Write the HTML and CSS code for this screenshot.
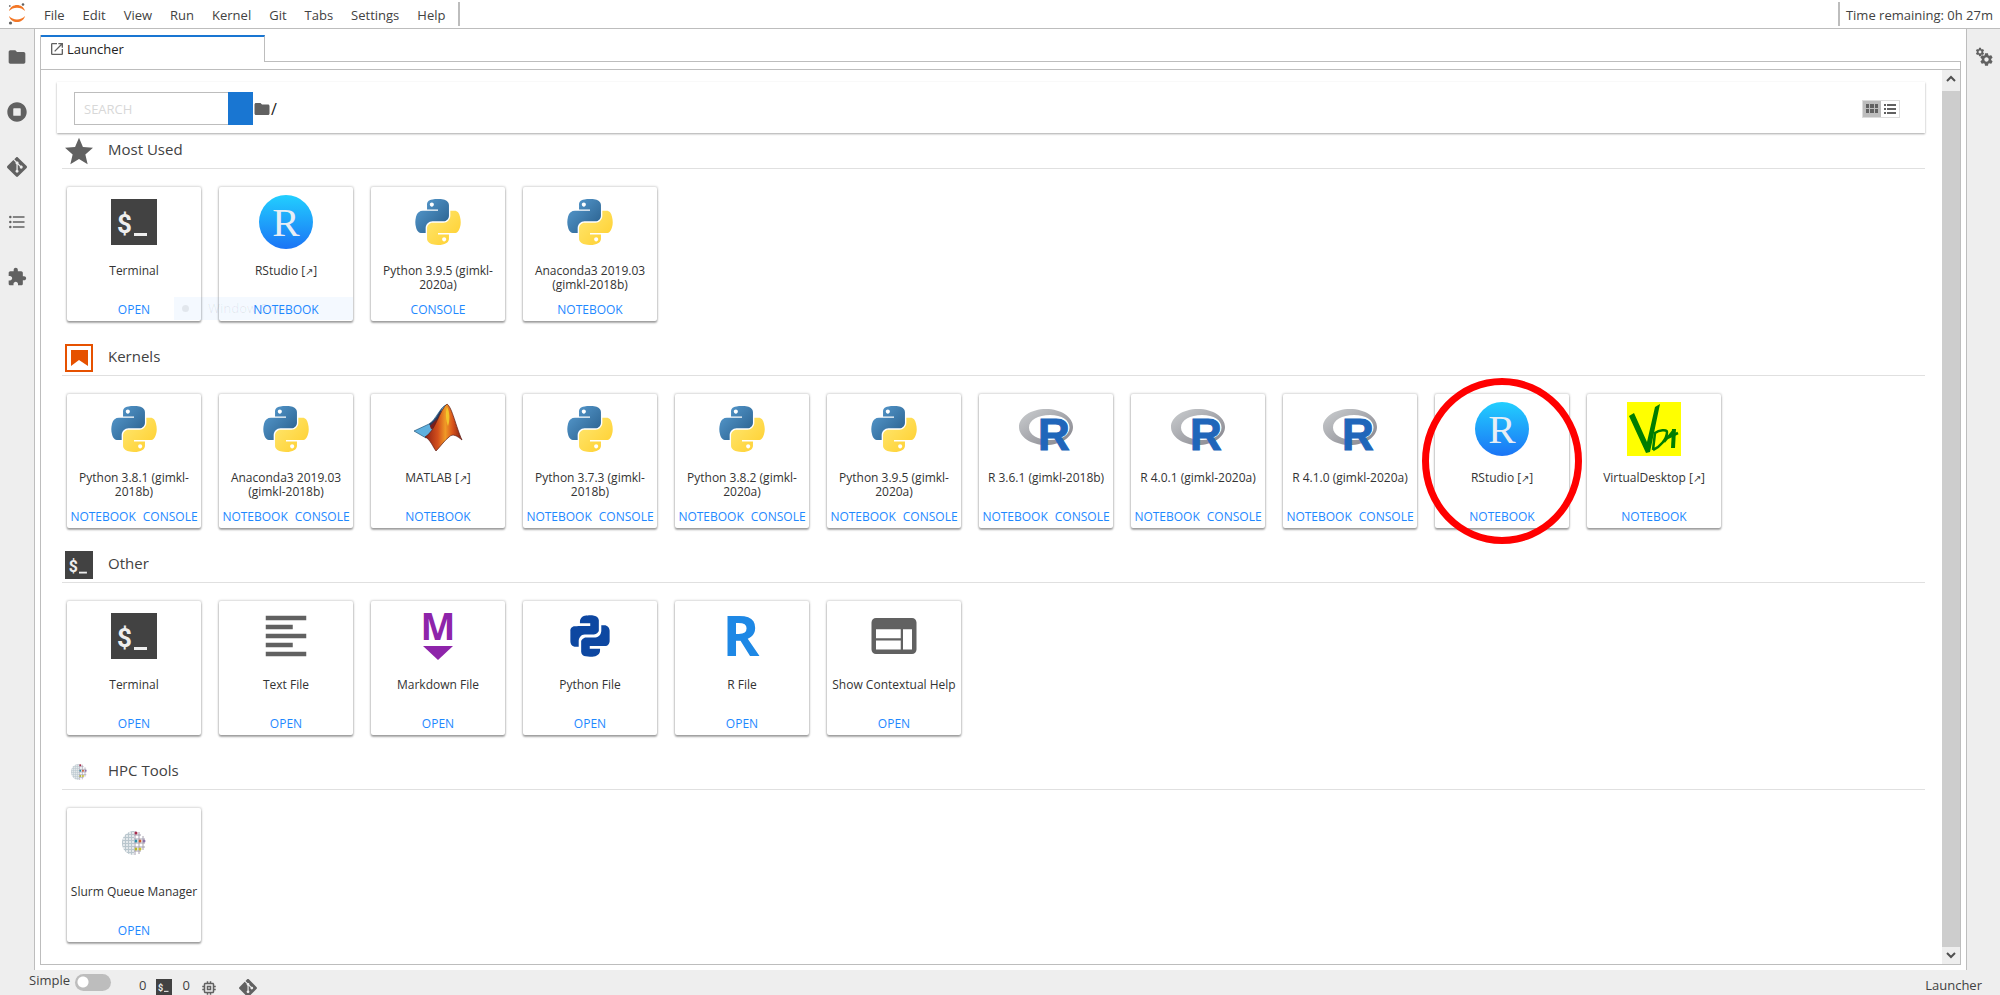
FILE: index.html
```
<!DOCTYPE html>
<html lang="en">
<head>
<meta charset="utf-8">
<title>JupyterLab</title>
<link rel="stylesheet" href="styles.css">
</head>
<body>
<svg class="defs" aria-hidden="true">
  <defs>
    <linearGradient id="py-blue" x1="0" y1="0" x2="1" y2="1"><stop offset="0" stop-color="#5a9fd4"/><stop offset="1" stop-color="#255a87"/></linearGradient>
    <linearGradient id="py-yellow" x1="0" y1="0" x2="1" y2="1"><stop offset="0" stop-color="#ffe873"/><stop offset="1" stop-color="#ffce2b"/></linearGradient>
    <linearGradient id="rs-blue" x1="0" y1="0" x2="0" y2="1"><stop offset="0" stop-color="#22cfff"/><stop offset="1" stop-color="#1b74f5"/></linearGradient>
    <linearGradient id="r-ring" x1="0" y1="0" x2="1" y2="1"><stop offset="0" stop-color="#cbced0"/><stop offset="1" stop-color="#84838b"/></linearGradient>
    <linearGradient id="ml-orange" x1="0" y1="0" x2="1" y2="0"><stop offset="0" stop-color="#8c1f14"/><stop offset=".35" stop-color="#d4501c"/><stop offset=".55" stop-color="#ef9a26"/><stop offset=".75" stop-color="#d9541b"/><stop offset="1" stop-color="#7c1c12"/></linearGradient>
    <pattern id="mesh" width="3" height="3" patternUnits="userSpaceOnUse"><path d="M0 .5H3M.5 0V3" stroke="#b9c6cd" stroke-width="1"/></pattern>
  </defs>
  <symbol id="folder" viewBox="0 0 24 24"><path d="M10 4H4c-1.100 0-2 .9-2 2v12c0 1.100.9 2 2 2h16c1.100 0 2-.9 2-2V8c0-1.100-.9-2-2-2h-8z"/></symbol>
  <symbol id="running" viewBox="0 0 512 512"><path d="M256 8C119 8 8 119 8 256s111 248 248 248 248-111 248-248S393 8 256 8zm96 328c0 8.800-7.200 16-16 16H176c-8.800 0-16-7.200-16-16V176c0-8.800 7.200-16 16-16h160c8.800 0 16 7.200 16 16z"/></symbol>
  <symbol id="git" viewBox="0 0 24 24"><path d="M23.546 10.93L13.067.452c-.604-.603-1.582-.603-2.188 0L8.708 2.627l2.760 2.760c.645-.215 1.379-.07 1.889.441.516.515.658 1.258.438 1.900l2.658 2.660c.645-.223 1.387-.078 1.900.435.721.72.721 1.884 0 2.604-.719.719-1.881.719-2.600 0-.539-.541-.674-1.337-.404-1.996L12.860 8.955v6.525c.176.086.342.203.488.348.713.721.713 1.883 0 2.600-.719.721-1.889.721-2.609 0-.719-.719-.719-1.879 0-2.598.182-.18.387-.316.605-.406V8.835c-.217-.091-.424-.222-.6-.401-.545-.545-.676-1.342-.396-2.009L7.636 3.700.45 10.881c-.6.605-.6 1.584 0 2.189l10.480 10.477c.604.604 1.582.604 2.186 0l10.430-10.430c.605-.603.605-1.582 0-2.187"/></symbol>
  <symbol id="toc" viewBox="0 0 24 24"><path d="M7 5H21V7H7zM7 11H21V13H7zM7 17H21V19H7z"/><circle cx="4" cy="6" r="1.500"/><circle cx="4" cy="12" r="1.500"/><circle cx="4" cy="18" r="1.500"/></symbol>
  <symbol id="puzzle" viewBox="0 0 24 24"><path d="M20.500 11H19V7c0-1.100-.9-2-2-2h-4V3.500C13 2.120 11.880 1 10.500 1S8 2.120 8 3.500V5H4c-1.100 0-1.990.9-1.990 2v3.800H3.500c1.490 0 2.700 1.210 2.700 2.700s-1.210 2.700-2.700 2.700H2V20c0 1.100.9 2 2 2h3.800v-1.500c0-1.490 1.210-2.700 2.700-2.700s2.700 1.210 2.700 2.700V22H17c1.100 0 2-.9 2-2v-4h1.500c1.380 0 2.500-1.120 2.500-2.500S21.880 11 20.500 11z"/></symbol>
  <symbol id="gear" viewBox="0 0 24 24"><path d="M19.430 12.980c.04-.32.07-.64.07-.98s-.03-.66-.07-.98l2.110-1.650c.19-.15.24-.42.12-.64l-2-3.460c-.12-.22-.39-.3-.61-.22l-2.490 1c-.52-.4-1.080-.73-1.690-.98l-.38-2.650C14.460 2.180 14.250 2 14 2h-4c-.25 0-.46.18-.49.42l-.38 2.650c-.61.25-1.170.59-1.690.98l-2.490-1c-.23-.09-.49 0-.61.22l-2 3.460c-.13.22-.07.49.12.64l2.110 1.650c-.04.32-.07.65-.07.98s.03.66.07.98l-2.110 1.650c-.19.15-.24.42-.12.64l2 3.460c.12.22.39.3.61.22l2.490-1c.52.4 1.080.73 1.690.98l.38 2.650c.03.24.24.42.49.42h4c.25 0 .46-.18.49-.42l.38-2.650c.61-.25 1.170-.59 1.690-.98l2.490 1c.23.09.49 0 .61-.22l2-3.460c.12-.22.07-.49-.12-.64zM12 15.500c-1.930 0-3.500-1.570-3.500-3.500s1.570-3.500 3.500-3.500 3.500 1.570 3.500 3.500-1.570 3.500-3.500 3.500z"/></symbol>
  <symbol id="launch" viewBox="0 0 24 24"><path d="M19 19H5V5h7V3H5a2 2 0 00-2 2v14a2 2 0 002 2h14c1.100 0 2-.9 2-2v-7h-2zM14 3v2h3.590l-9.830 9.830 1.410 1.410L19 6.410V10h2V3z"/></symbol>
  <symbol id="chip" viewBox="0 0 24 24"><path d="M15 9H9v6h6V9zm-2 4h-2v-2h2v2zm8-2V9h-2V7c0-1.100-.9-2-2-2h-2V3h-2v2h-2V3H9v2H7c-1.100 0-2 .9-2 2v2H3v2h2v2H3v2h2v2c0 1.100.9 2 2 2h2v2h2v-2h2v2h2v-2h2c1.100 0 2-.9 2-2v-2h2v-2h-2v-2h2zm-4 6H7V7h10v10z"/></symbol>
  <symbol id="star" viewBox="2 2 20 19"><path d="M12 17.270L18.180 21l-1.640-7.030L22 9.240l-7.190-.61L12 2 9.190 8.630 2 9.240l5.460 4.730L5.820 21z"/></symbol>
  <symbol id="bookmark" viewBox="0 0 28 28"><path fill="none" stroke="#e65100" stroke-width="2" d="M1 1H27V27H1z"/><path fill="#e65100" d="M6 6H23V22L14 16 6 22z"/></symbol>
  <symbol id="python" viewBox="-10 -10 131 132"><path fill="url(#py-blue)" d="M54.919 0C50.335.022 45.958.413 42.106 1.095 30.760 3.099 28.700 7.295 28.700 15.032v10.219h26.812v3.406H18.637c-7.792 0-14.616 4.684-16.750 13.594-2.462 10.213-2.571 16.586 0 27.250 1.906 7.938 6.458 13.594 14.250 13.594h9.219v-12.250c0-8.850 7.657-16.656 16.750-16.656h26.781c7.455 0 13.406-6.138 13.406-13.625V15.033c0-7.266-6.130-12.725-13.406-13.937C64.282.328 59.502-.02 54.919 0zm-14.500 8.219c2.770 0 5.031 2.299 5.031 5.125s-2.261 5.094-5.031 5.094-5.031-2.278-5.031-5.094 2.252-5.125 5.031-5.125z"/><path fill="url(#py-yellow)" d="M85.638 28.657v11.906c0 9.231-7.826 17-16.750 17H42.107c-7.336 0-13.406 6.279-13.406 13.625v25.531c0 7.266 6.319 11.540 13.406 13.625 8.487 2.496 16.626 2.947 26.781 0 6.750-1.954 13.406-5.888 13.406-13.625V86.501H55.513v-3.406H95.700c7.792 0 10.696-5.435 13.406-13.594 2.799-8.399 2.680-16.476 0-27.250-1.926-7.757-5.604-13.594-13.406-13.594zM70.575 93.313c2.779 0 5.031 2.278 5.031 5.094s-2.252 5.125-5.031 5.125-5.031-2.299-5.031-5.125 2.261-5.094 5.031-5.094z"/></symbol>
  <symbol id="python-file" viewBox="0 0 22 22"><path fill="#0d47a1" d="M11.100 6.900V5.800H6.900c0-.5 0-1.300.2-1.600.4-.7.8-1.100 1.700-1.400 1.700-.3 2.500-.3 3.900-.1 1 .1 1.900.9 1.900 1.900v4.200c0 .5-.9 1.600-2 1.600H8.800c-1.500 0-2.400 1.400-2.400 2.800v2.200H4.700C3.500 15.100 3 14 3 13.100V9c-.1-1 .6-2 1.800-2 1.500-.1 6.300-.1 6.300-.1zM10.900 15.100v1.100h4.200c0 .5 0 1.300-.2 1.600-.4.7-.8 1.100-1.700 1.400-1.700.3-2.500.3-3.900.1-1-.1-1.900-.9-1.900-1.900v-4.200c0-.5.9-1.600 2-1.600h3.800c1.500 0 2.400-1.400 2.400-2.800V6.600h1.700C18.500 6.900 19 8 19 8.900V13c0 1-.7 2.100-1.900 2.100z"/></symbol>
  <symbol id="matlab" viewBox="0 0 54 54"><path fill="#5fb0de" stroke="#24577c" stroke-width=".7" d="M3 29L18 22C24 19 30 4 35 3C33 12 27 24 22 30L15 36z"/><path fill="#2a3a5e" d="M18 22C24 19 28 10 31 6C29 15 26 21 21 27z"/><path fill="#7a1e1e" d="M19 24L26 17L25 26L20 27z"/><path fill="url(#ml-orange)" stroke="#5b1a12" stroke-width=".7" d="M36 2C41 5 45 25 51 38C46 34 42 31 38 35C33 39 29 45 25 49C22 45 19 37 14 35C24 30 29 7 36 2z"/><path fill="#f6d32d" opacity=".8" d="M36 5C39 10 39 18 37 24C35 20 34 10 36 5z"/></symbol>
  <symbol id="r-ellipse" viewBox="0 0 54 54"><path fill="url(#r-ring)" fill-rule="evenodd" d="M27 7C42 7 54 15 54 25S42 43 27 43 0 35 0 25 12 7 27 7zM31 13C19 13 10 18 10 25.500S19 38 31 38 50.500 33 50.500 25.500 43 13 31 13z"/></symbol>
  <symbol id="vdi" viewBox="0 0 54 54"><path fill="#ff0" d="M0 0H54V54H0z"/><path fill="#007d00" d="M2 14L7 11L20 40L28 5L33 2L23 50L19 51z"/><path fill="none" stroke="#007d00" stroke-width="2.500" d="M26 48L28 31C32 28 40 27 40 30C40 37 33 45 26 48M37 40L47 28M38 37L51 31"/><path fill="none" stroke="#007d00" stroke-width="4" d="M47 27L46 46"/></symbol>
  <symbol id="text-file" viewBox="0 0 24 24"><path fill="#616161" d="M15 15H3v2h12zM15 7H3v2h12zM3 13h18v-2H3zM3 21h18v-2H3zM3 3v2h18V3z"/></symbol>
  <symbol id="inspector" viewBox="0 0 24 24"><path fill="#616161" d="M20 4H4c-1.100 0-2 .9-2 2v12c0 1.100.9 2 2 2h16c1.100 0 2-.9 2-2V6c0-1.100-.9-2-2-2zm-5 14H4v-4h11zm0-5H4V9h11zm5 5h-4V9h4z"/></symbol>
  <symbol id="slurm" viewBox="0 0 54 54"><path fill="#e3e8eb" d="M27 15A12 12 0 0 0 27 39z"/><path fill="url(#mesh)" d="M27 15A12 12 0 0 0 27 39z"/><path fill="none" stroke="#a5a0b0" stroke-width="1" d="M28 15V39M32 16V38M36 20V34M27 19H34M27 23H38M27 27H38M27 31H38M27 35H34"/><g><circle cx="29" cy="17" r="1.500" fill="#a52a4a"/><circle cx="29" cy="25" r="1.500" fill="#2c8fa8"/><circle cx="33" cy="25" r="1.500" fill="#cf5b32"/><circle cx="37" cy="25" r="1.500" fill="#8a6fa8"/><circle cx="29" cy="33" r="1.500" fill="#b5b52c"/><circle cx="33" cy="33" r="1.500" fill="#c7c032"/></g></symbol>
  <symbol id="jupyter" viewBox="0 0 18 22"><path fill="#f37726" d="M1 8C3 0 15 0 17 8C13 3.500 5 3.500 1 8zM1 13C3 21 15 21 17 13C13 17.500 5 17.500 1 13z"/><circle cx="1.800" cy="3" r=".9" fill="#767677"/><circle cx="15" cy="1.500" r="1.300" fill="#616262"/><circle cx="2.500" cy="20" r="1.600" fill="#616262"/></symbol>
</svg>

<header class="menubar">
  <svg class="logo" role="img" aria-label="Jupyter"><use href="#jupyter"/></svg>
  <nav class="menus">
    <button>File</button><button>Edit</button><button>View</button><button>Run</button><button>Kernel</button><button>Git</button><button>Tabs</button><button>Settings</button><button>Help</button>
  </nav>
  <span class="remaining">Time remaining: 0h 27m</span>
</header>

<div class="workspace">
  <aside class="side side-left">
    <button aria-label="File browser"><svg class="i20"><use href="#folder"/></svg></button>
    <button aria-label="Running"><svg class="i20"><use href="#running"/></svg></button>
    <button aria-label="Git"><svg class="i20"><use href="#git"/></svg></button>
    <button aria-label="Table of contents"><svg class="i20"><use href="#toc"/></svg></button>
    <button aria-label="Extensions"><svg class="i20"><use href="#puzzle"/></svg></button>
  </aside>

  <main class="dock">
    <div class="tabs">
      <button class="tab"><svg class="i16"><use href="#launch"/></svg>Launcher</button>
      <span class="tab-rest"></span>
    </div>
    <div class="panel">
      <div class="launcher">
        <form class="toolbar">
          <input type="text" placeholder="SEARCH" aria-label="Search">
          <button type="button" class="go" aria-label="Search now"></button>
          <svg class="crumb-icon"><use href="#folder"/></svg><span class="crumb">/</span>
          <div class="views">
            <button type="button" class="on" aria-label="Grid view"><svg viewBox="0 0 12 10"><path d="M0 0H3V4H0zM4 0H8V4H4zM9 0H12V4H9zM0 5H3V9H0zM4 5H8V9H4zM9 5H12V9H9z"/></svg></button>
            <button type="button" aria-label="List view"><svg viewBox="0 0 12 10"><path d="M0 0H2V2H0zM3 0H12V2H3zM0 4H2V6H0zM3 4H12V6H3zM0 8H2V10H0zM3 8H12V10H3z"/></svg></button>
          </div>
        </form>

        <section>
          <h2><svg><use href="#star"/></svg>Most Used</h2>
          <div class="cards">
            <article><svg viewBox="0 0 54 54"><path fill="#424242" d="M4 4H50V50H4z"/><text class="dollar" x="10" y="38">$</text><path fill="#eee" d="M27 38H40V41H27z"/></svg><p>Terminal</p><div><button>OPEN</button></div></article>
            <article><svg viewBox="0 0 54 54"><circle cx="27" cy="27" r="27" fill="url(#rs-blue)"/><text class="rs" x="27" y="41">R</text></svg><p>RStudio [<i>↗</i>]</p><div><button>NOTEBOOK</button></div><span class="ghost">Window Snip</span></article>
            <article><svg><use href="#python"/></svg><p>Python 3.9.5 (gimkl-2020a)</p><div><button>CONSOLE</button></div></article>
            <article><svg><use href="#python"/></svg><p>Anaconda3 2019.03 (gimkl-2018b)</p><div><button>NOTEBOOK</button></div></article>
          </div>
        </section>

        <section>
          <h2><svg><use href="#bookmark"/></svg>Kernels</h2>
          <div class="cards">
            <article><svg><use href="#python"/></svg><p>Python 3.8.1 (gimkl-2018b)</p><div><button>NOTEBOOK</button><button>CONSOLE</button></div></article>
            <article><svg><use href="#python"/></svg><p>Anaconda3 2019.03 (gimkl-2018b)</p><div><button>NOTEBOOK</button><button>CONSOLE</button></div></article>
            <article><svg><use href="#matlab"/></svg><p>MATLAB [<i>↗</i>]</p><div><button>NOTEBOOK</button></div></article>
            <article><svg><use href="#python"/></svg><p>Python 3.7.3 (gimkl-2018b)</p><div><button>NOTEBOOK</button><button>CONSOLE</button></div></article>
            <article><svg><use href="#python"/></svg><p>Python 3.8.2 (gimkl-2020a)</p><div><button>NOTEBOOK</button><button>CONSOLE</button></div></article>
            <article><svg><use href="#python"/></svg><p>Python 3.9.5 (gimkl-2020a)</p><div><button>NOTEBOOK</button><button>CONSOLE</button></div></article>
            <article><svg viewBox="0 0 54 54"><use href="#r-ellipse"/><text class="r-blue" x="19" y="48">R</text></svg><p>R 3.6.1 (gimkl-2018b)</p><div><button>NOTEBOOK</button><button>CONSOLE</button></div></article>
            <article><svg viewBox="0 0 54 54"><use href="#r-ellipse"/><text class="r-blue" x="19" y="48">R</text></svg><p>R 4.0.1 (gimkl-2020a)</p><div><button>NOTEBOOK</button><button>CONSOLE</button></div></article>
            <article><svg viewBox="0 0 54 54"><use href="#r-ellipse"/><text class="r-blue" x="19" y="48">R</text></svg><p>R 4.1.0 (gimkl-2020a)</p><div><button>NOTEBOOK</button><button>CONSOLE</button></div></article>
            <article><svg viewBox="0 0 54 54"><circle cx="27" cy="27" r="27" fill="url(#rs-blue)"/><text class="rs" x="27" y="41">R</text></svg><p>RStudio [<i>↗</i>]</p><div><button>NOTEBOOK</button></div><span class="ring"></span></article>
            <article><svg><use href="#vdi"/></svg><p>VirtualDesktop [<i>↗</i>]</p><div><button>NOTEBOOK</button></div></article>
          </div>
        </section>

        <section>
          <h2><svg viewBox="4 4 46 46"><path fill="#424242" d="M4 4H50V50H4z"/><text class="dollar" x="10" y="38">$</text><path fill="#eee" d="M27 38H40V41H27z"/></svg>Other</h2>
          <div class="cards">
            <article><svg viewBox="0 0 54 54"><path fill="#424242" d="M4 4H50V50H4z"/><text class="dollar" x="10" y="38">$</text><path fill="#eee" d="M27 38H40V41H27z"/></svg><p>Terminal</p><div><button>OPEN</button></div></article>
            <article><svg><use href="#text-file"/></svg><p>Text File</p><div><button>OPEN</button></div></article>
            <article><svg viewBox="0 0 54 54"><text class="md" x="27" y="31">M</text><path fill="#8e24aa" d="M12 37H42L27 51z"/></svg><p>Markdown File</p><div><button>OPEN</button></div></article>
            <article><svg><use href="#python-file"/></svg><p>Python File</p><div><button>OPEN</button></div></article>
            <article><svg viewBox="0 0 54 54"><text class="r-light" x="26" y="47">R</text></svg><p>R File</p><div><button>OPEN</button></div></article>
            <article><svg><use href="#inspector"/></svg><p>Show Contextual Help</p><div><button>OPEN</button></div></article>
          </div>
        </section>

        <section>
          <h2><svg viewBox="6 6 42 42"><use href="#slurm" width="54" height="54"/></svg>HPC Tools</h2>
          <div class="cards">
            <article><svg><use href="#slurm"/></svg><p>Slurm Queue Manager</p><div><button>OPEN</button></div></article>
          </div>
        </section>
      </div>
      <div class="scrollbar" aria-hidden="true">
        <span class="arrow"><svg viewBox="0 0 10 7"><path d="M1 6L5 2L9 6"/></svg></span>
        <span class="thumb"></span>
        <span class="arrow"><svg viewBox="0 0 10 7"><path d="M1 1L5 5L9 1"/></svg></span>
      </div>
    </div>
  </main>

  <aside class="side side-right">
    <button aria-label="Property inspector"><svg class="gears" viewBox="0 0 18 20"><use href="#gear" width="10" height="10"/><use href="#gear" x="4" y="5" width="15" height="15"/></svg></button>
  </aside>
</div>

<footer class="status">
  <label class="simple">Simple<input type="checkbox" role="switch"></label>
  <div class="counts">
    <span>0</span><svg class="i16" viewBox="4 4 46 46"><path fill="#424242" d="M4 4H50V50H4z"/><text class="dollar" x="10" y="38">$</text><path fill="#eee" d="M27 38H40V41H27z"/></svg>
    <span>0</span><svg class="i18"><use href="#chip"/></svg>
    <svg class="i18 git"><use href="#git"/></svg>
  </div>
  <span class="mode">Launcher</span>
</footer>
</body>
</html>
```
FILE: styles.css
```
* { box-sizing: border-box; }

body {
  margin: 0;
  height: 100vh;
  display: flex;
  flex-direction: column;
  overflow: hidden;
  background: #fff;
  color: #424242;
  font-family: "Open Sans", "Noto Sans", sans-serif;
  font-size: 13px;
}

button {
  border: 0;
  padding: 0;
  background: none;
  color: inherit;
  font: inherit;
}

svg { display: block; flex: none; fill: #616161; }
.defs { position: absolute; width: 0; height: 0; }
.i16 { width: 16px; height: 16px; }
.i18 { width: 18px; height: 18px; }
.i20 { width: 20px; height: 20px; }

.dollar { font: 700 26px Roboto, sans-serif; fill: #eee; }
.rs { font: 41px "Liberation Serif", serif; fill: #e8eef5; text-anchor: middle; }
.r-blue { font: 700 44px "Liberation Sans", sans-serif; fill: #2066ba; stroke: #2066ba; stroke-width: 1px; }
.md { font: 700 37px "Open Sans", sans-serif; fill: #8e24aa; text-anchor: middle; }
.r-light { font: 700 56px "Open Sans", sans-serif; fill: #1e88e5; text-anchor: middle; }

.menubar {
  display: flex;
  align-items: center;
  height: 29px;
  padding: 2px 7px 2px 8px;
  border-bottom: 1px solid #bdbdbd;
}
.logo { width: 18px; height: 22px; }
.menus {
  display: flex;
  align-items: center;
  gap: 18px;
  height: 24px;
  padding: 2px 13px 0 18px;
  border-right: 2px solid #bdbdbd;
}
.remaining {
  height: 24px;
  margin-left: auto;
  padding: 0 0 0 6px;
  border-left: 2px solid #bdbdbd;
  line-height: 26px;
}

.workspace { flex: 1; display: flex; min-height: 0; }
.side {
  display: flex;
  flex-direction: column;
  background: #eee;
}
.side button {
  display: flex;
  align-items: center;
  justify-content: center;
  height: 55px;
}
.side-left { width: 35px; border-right: 1px solid #bdbdbd; }
.side-right { width: 34px; border-left: 1px solid #bdbdbd; }
.gears { width: 18px; height: 20px; }

.dock {
  flex: 1;
  display: flex;
  flex-direction: column;
  min-width: 0;
  padding: 6px 5px 5px;
}
.tabs { display: flex; height: 34px; border-left: 1px solid #bdbdbd; }
.tab {
  display: flex;
  align-items: center;
  gap: 2px;
  width: 224px;
  height: 27px;
  padding: 0 8px 2px;
  border-top: 2px solid #1976d2;
  border-right: 1px solid #bdbdbd;
  color: #212121;
}
.tab-rest {
  flex: 1;
  margin-top: 26px;
  border: 1px solid #bdbdbd;
  border-width: 1px 1px 0 0;
}
.panel {
  flex: 1;
  display: flex;
  min-height: 0;
  border: 1px solid #bdbdbd;
}
.launcher { flex: 1; min-width: 0; padding: 12px 17px 0 16px; }

.toolbar {
  display: flex;
  align-items: center;
  height: 51px;
  padding: 2px 25px 0 17px;
  box-shadow: 0 1px 2px rgba(0, 0, 0, .35);
}
.toolbar input {
  width: 154px;
  height: 33px;
  padding: 0 9px;
  border: 1px solid #bdbdbd;
  border-right: 0;
  background: #fff;
  font: inherit;
}
.toolbar input::placeholder { color: #d8d8d8; opacity: 1; }
.go { width: 25px; height: 33px; background: #1976d2; }
.crumb-icon { width: 18px; height: 18px; }
.crumb { font-size: 16px; color: #212121; }
.views {
  display: flex;
  margin-left: auto;
  border: 1px solid #ddd;
}
.views button {
  display: flex;
  align-items: center;
  justify-content: center;
  width: 18px;
  height: 16px;
}
.views .on { background: #bdbdbd; }
.views svg { width: 12px; height: 10px; }

section { padding: 0 0 19px 5px; }
h2 {
  display: flex;
  gap: 15px;
  height: 36px;
  margin: 0;
  padding: 4px 0 0 3px;
  border-bottom: 1px solid #e0e0e0;
  font-size: 15px;
  font-weight: 400;
  line-height: 24px;
}
h2 svg { width: 28px; height: 28px; }
.cards {
  display: flex;
  flex-wrap: wrap;
  gap: 18px;
  padding: 18px 0 0 5px;
}
article {
  position: relative;
  display: flex;
  flex-direction: column;
  align-items: center;
  width: 134px;
  height: 134px;
  padding: 8px 3px 0;
  border-radius: 2px;
  background: #fff;
  box-shadow: 0 0 2px 1px rgba(0, 0, 0, .15), 0 2px 2px rgba(0, 0, 0, .3);
  color: #333;
  font-size: 12px;
  line-height: 14px;
  text-align: center;
}
article > svg { width: 54px; height: 54px; }
article p { height: 30px; margin: 15px 0 7px; }
article i { font-size: 10px; font-style: normal; }
article div { display: flex; gap: 7px; }
article button { height: 18px; color: #1e88ff; }

.ghost {
  position: absolute;
  right: 0;
  bottom: 1px;
  width: 179px;
  height: 23px;
  padding-left: 34px;
  background: rgba(30, 136, 255, .05);
  color: rgba(0, 0, 0, .07);
  font-size: 13px;
  line-height: 23px;
  text-align: left;
}
.ghost::before {
  content: "";
  position: absolute;
  left: 8px;
  top: 8px;
  width: 7px;
  height: 7px;
  border-radius: 50%;
  background: rgba(0, 0, 0, .07);
}
.ring {
  position: absolute;
  left: -13px;
  top: -16px;
  width: 160px;
  height: 166px;
  border: 7px solid #f00;
  border-radius: 50%;
}

.scrollbar { display: flex; flex-direction: column; width: 18px; background: #eee; }
.arrow { display: flex; justify-content: center; padding: 5px 0; }
.arrow svg { width: 10px; height: 7px; fill: none; stroke: #505050; stroke-width: 2; }
.thumb { flex: 1; margin-top: 4px; background: #cdcdcd; }

.status {
  display: flex;
  height: 25px;
  padding: 0 18px 0 29px;
  background: #eee;
}
.simple { display: flex; gap: 5px; height: 21px; line-height: 20px; }
.simple input {
  appearance: none;
  width: 36px;
  height: 17px;
  margin: 4px 0 0;
  border-radius: 9px;
  background: radial-gradient(circle at 8px 8px, #fff 5px, #bdbdbd 6px);
}
.counts { display: flex; gap: 10px; padding: 9px 0 0 28px; }
.counts span { line-height: 12px; }
.counts .git { margin-left: 11px; }
.mode { margin-left: auto; line-height: 30px; }
```
